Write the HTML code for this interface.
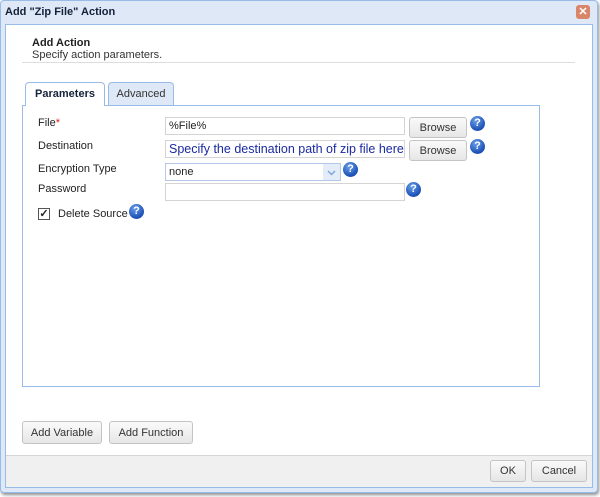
<!DOCTYPE html>
<html><head><style>
*{box-sizing:border-box;margin:0;padding:0}
body{width:600px;height:497px;background:#fff;font-family:"Liberation Sans",Arial,sans-serif;font-size:11px;color:#222;position:relative;overflow:hidden}
.abs{position:absolute;white-space:nowrap}
.frame{left:0;top:0;width:598px;height:493px;background:#dfe8f6;border:1px solid #99bbe8;border-radius:4px;box-shadow:1px 2px 3px rgba(0,0,0,.45)}
.title{left:5px;top:6px;font-weight:bold;font-size:11px;color:#15223b}
.close{left:576px;top:5px;width:14px;height:14px;background:#d9856a;border-radius:3px;color:#fff;font-size:11px;line-height:14px;text-align:center;font-weight:bold}
.inner{left:5px;top:24px;width:588px;height:464px;background:#fff;border:1px solid #99bbe8}
.footer{left:6px;top:455px;width:586px;height:32px;background:#f0f0f0;border-top:1px solid #d6d6d6}
.btn{border:1px solid #c4c4c4;border-radius:3px;background:linear-gradient(#fafafa,#e6e6e6);font-size:11px;color:#333;text-align:center}
.inp{border:1px solid #d4d4d4;background:#fff;height:18px;padding-left:3px;font-size:11px;line-height:16px;overflow:hidden}
.help{width:15px;height:15px;border-radius:50%;background:radial-gradient(circle at 40% 30%,#6aa0ea,#1b4fb5 70%);color:#fff;font-weight:bold;font-size:11px;line-height:15px;text-align:center}
.tab{height:23px;border:1px solid #99bbe8;border-bottom:none;border-radius:4px 4px 0 0;text-align:center;line-height:22px;font-size:11px}
</style></head><body>
<div class="abs frame"></div>
<div class="abs title">Add "Zip File" Action</div>
<div class="abs close">✕</div>
<div class="abs inner"></div>
<div class="abs" style="left:32px;top:37px;font-weight:bold;color:#222">Add Action</div>
<div class="abs" style="left:32px;top:49px;color:#333">Specify action parameters.</div>
<div class="abs" style="left:22px;top:62px;width:553px;height:1px;background:#ddd"></div>

<div class="abs tab" style="left:25px;top:82px;width:80px;background:#fff;font-weight:bold;color:#15223b;height:24px;z-index:2">Parameters</div>
<div class="abs tab" style="left:108px;top:82px;width:66px;background:#dfe8f6;color:#333">Advanced</div>
<div class="abs" style="left:22px;top:105px;width:518px;height:282px;border:1px solid #99bbe8"></div>

<div class="abs" style="left:38px;top:117px">File<span style="color:#d22">*</span></div>
<div class="abs" style="left:38px;top:140px">Destination</div>
<div class="abs" style="left:38px;top:163px">Encryption Type</div>
<div class="abs" style="left:38px;top:183px">Password</div>

<div class="abs inp" style="left:165px;top:117px;width:240px">%File%</div>
<div class="abs inp" style="left:165px;top:140px;width:240px;color:#1a2aa0;font-size:12.5px;padding-left:3px">Specify the destination path of zip file here</div>
<div class="abs inp" style="left:165px;top:163px;width:176px;border-color:#b5c8e8">none</div>
<div class="abs" style="left:323px;top:164px;width:17px;height:16px;background:#e4ecf8"><svg width="17" height="16"><path d="M5 7l3.5 3.5L12 7" fill="none" stroke="#7aa7de" stroke-width="1.5"/></svg></div>
<div class="abs inp" style="left:165px;top:183px;width:240px"></div>

<div class="abs btn" style="left:409px;top:117px;width:58px;height:21px;line-height:20px">Browse</div>
<div class="abs btn" style="left:409px;top:140px;width:58px;height:21px;line-height:20px">Browse</div>
<div class="abs help" style="left:470px;top:116px">?</div>
<div class="abs help" style="left:470px;top:139px">?</div>
<div class="abs help" style="left:343px;top:162px">?</div>
<div class="abs help" style="left:406px;top:182px">?</div>

<div class="abs" style="left:38px;top:208px;width:12px;height:12px;border:1px solid #555;font-size:11px;line-height:10px;text-align:center;font-weight:bold">✓</div>
<div class="abs" style="left:58px;top:208px">Delete Source</div>
<div class="abs help" style="left:129px;top:204px">?</div>

<div class="abs btn" style="left:22px;top:421px;width:80px;height:23px;line-height:22px">Add Variable</div>
<div class="abs btn" style="left:109px;top:421px;width:84px;height:23px;line-height:22px">Add Function</div>

<div class="abs footer"></div>
<div class="abs btn" style="left:490px;top:460px;width:36px;height:22px;line-height:21px">OK</div>
<div class="abs btn" style="left:531px;top:460px;width:56px;height:22px;line-height:21px">Cancel</div>
</body></html>
